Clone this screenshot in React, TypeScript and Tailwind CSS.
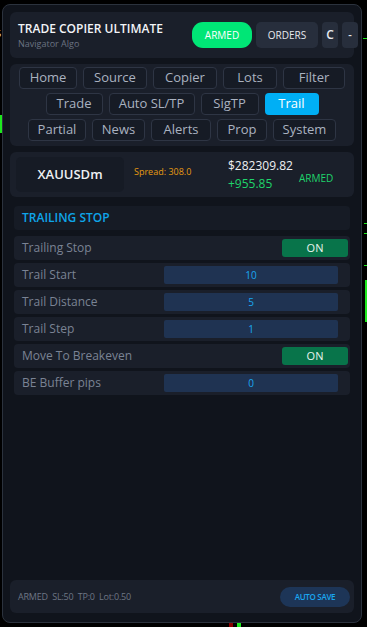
import React from "react";

const tabsRows: { label: string; w: number; active?: boolean }[][] = [
  [
    { label: "Home", w: 58 },
    { label: "Source", w: 64 },
    { label: "Copier", w: 64 },
    { label: "Lots", w: 54 },
    { label: "Filter", w: 62 },
  ],
  [
    { label: "Trade", w: 57 },
    { label: "Auto SL/TP", w: 86 },
    { label: "SigTP", w: 58 },
    { label: "Trail", w: 54, active: true },
  ],
  [
    { label: "Partial", w: 58 },
    { label: "News", w: 53 },
    { label: "Alerts", w: 60 },
    { label: "Prop", w: 50 },
    { label: "System", w: 63 },
  ],
];

function Toggle() {
  return (
    <div className="w-[66px] h-[18px] rounded-[3px] bg-[#08744a] flex items-center justify-center text-[11px] text-[#e8f5ee]">
      ON
    </div>
  );
}

function NumInput({ v }: { v: string }) {
  return (
    <div className="w-[174px] h-[18px] rounded-[2px] bg-[#1f3352] flex items-center justify-center text-[10px] text-[#1aa7f0]">
      {v}
    </div>
  );
}

function Row({ label, children, toggle }: { label: string; children: React.ReactNode; toggle?: boolean }) {
  return (
    <div className={`h-[24px] rounded-[4px] bg-[#1a1f2a] flex items-center pl-[8px] ${toggle ? "pr-[2px]" : "pr-[12px]"}`}>
      <div className="flex-1 text-[12px] text-[#7a8394]">{label}</div>
      {children}
    </div>
  );
}

export default function App() {
  return (
    <div
      className="w-[367px] h-[627px] bg-black relative overflow-hidden"
      style={{ fontFamily: '"Open Sans", "Noto Sans", sans-serif' }}
    >
      {/* chart bits behind */}
      <div className="absolute left-0 top-[115px] w-[2px] h-[18px] bg-[#1ee81e]" />
      <div className="absolute left-[-4px] top-[29px] text-[9px] text-white leading-none">5</div>
      <div className="absolute right-0 top-[280px] w-[2px] h-[42px] bg-[#1ee81e]" />
      <div className="absolute right-[0px] top-[223px] w-[3px] h-[1px] bg-[#1ee81e]" />
      <div className="absolute right-[0px] top-[233px] w-[3px] h-[1px] bg-[#1ee81e]" />
      <div className="absolute right-[0px] top-[265px] w-[3px] h-[1px] bg-[#1ee81e]" />
      <div className="absolute right-[0px] top-[38px] w-[4px] h-[1px] bg-[#1ee81e]" />
      <div className="absolute left-[229px] top-[623px] w-[4px] h-[4px] bg-[#8b0000]" />
      <div className="absolute left-[237px] top-[623px] w-[4px] h-[4px] bg-[#1ee81e]" />

      <div className="absolute left-[2px] top-[4px] w-[360px] h-[619px] rounded-[8px] border border-[#2b323d] bg-[#10141c] px-[7px] pt-[7px] pb-[9px] flex flex-col">
        {/* Header */}
        <div className="h-[46px] rounded-[6px] bg-[#1a1f2a] flex items-center pl-[8px]">
          <div className="flex-1 flex flex-col">
            <div className="text-[12px] font-semibold text-[#f2f4f7] leading-[15px]">
              TRADE COPIER ULTIMATE
            </div>
            <div className="text-[9px] text-[#6b7382] leading-[12px] mt-[2px]">Navigator Algo</div>
          </div>
          <div className="flex items-center gap-[4px] mr-[-4px]">
            <div className="w-[60px] h-[26px] rounded-[11px] bg-[#00e676] flex items-center justify-center text-[10px] text-white">
              ARMED
            </div>
            <div className="w-[62px] h-[26px] rounded-[5px] bg-[#272e3c] flex items-center justify-center text-[10px] text-[#e6e9ee]">
              ORDERS
            </div>
            <div className="w-[16px] h-[26px] rounded-[4px] bg-[#272e3c] flex items-center justify-center text-[12px] font-semibold text-[#e6e9ee]">
              C
            </div>
            <div className="w-[16px] h-[26px] rounded-[4px] bg-[#272e3c] flex items-center justify-center text-[11px] font-semibold text-[#e6e9ee]">
              -
            </div>
          </div>
        </div>

        {/* Tabs */}
        <div className="mt-[6px] h-[82px] rounded-[6px] bg-[#1a1f2a] flex flex-col items-center pt-[3px] gap-[4px]">
          {tabsRows.map((row, i) => (
            <div key={i} className="flex gap-[6px] justify-center">
              {row.map((t) => (
                <div
                  key={t.label}
                  style={{ width: t.w }}
                  className={`h-[22px] rounded-[4px] flex items-center justify-center text-[13px] ${
                    t.active
                      ? "bg-[#00aff5] text-white"
                      : "bg-[#161b25] border border-[#2e3544] text-[#aab2c0]"
                  }`}
                >
                  {t.label}
                </div>
              ))}
            </div>
          ))}
        </div>

        {/* Symbol */}
        <div className="mt-[6px] h-[45px] rounded-[6px] bg-[#1a1f2a] flex items-center px-[6px]">
          <div className="w-[108px] h-[35px] rounded-[5px] bg-[#161b25] flex items-center justify-center text-[13px] font-semibold text-[#eef0f3]">
            XAUUSDm
          </div>
          <div className="ml-[10px] w-[94px] text-[9px] text-[#e69a12] -mt-[6px]">Spread: 308.0</div>
          <div className="flex flex-col">
            <div className="text-[12px] text-[#eef0f3] leading-[16px]">$282309.82</div>
            <div className="text-[12px] text-[#1fd36b] leading-[16px] mt-[2px]">+955.85</div>
          </div>
          <div className="ml-[6px] mt-[8px] text-[10px] text-[#1fd36b]">ARMED</div>
        </div>

        {/* Section */}
        <div className="mt-[9px] px-[4px] flex flex-col">
          <div className="h-[24px] rounded-[4px] bg-[#161b25] flex items-center pl-[8px] text-[12px] font-semibold text-[#0ea5e9]">
            TRAILING STOP
          </div>
          <div className="mt-[6px] flex flex-col gap-[3px]">
            <Row label="Trailing Stop" toggle>
              <Toggle />
            </Row>
            <Row label="Trail Start">
              <NumInput v="10" />
            </Row>
            <Row label="Trail Distance">
              <NumInput v="5" />
            </Row>
            <Row label="Trail Step">
              <NumInput v="1" />
            </Row>
            <Row label="Move To Breakeven" toggle>
              <Toggle />
            </Row>
            <Row label="BE Buffer pips">
              <NumInput v="0" />
            </Row>
          </div>
        </div>

        <div className="flex-1" />

        {/* Footer */}
        <div className="h-[33px] rounded-[6px] bg-[#1a1f2a] flex items-center pl-[8px] pr-[4px]">
          <div className="flex-1 text-[9px] text-[#6e7685] tracking-[-0.2px]">ARMED&nbsp; SL:50&nbsp; TP:0&nbsp; Lot:0.50</div>
          <div className="w-[70px] h-[20px] rounded-[10px] bg-[#1d3557] flex items-center justify-center text-[8px] font-semibold text-[#1aa7f0] tracking-[-0.3px]">
            AUTO SAVE
          </div>
        </div>
      </div>
    </div>
  );
}
